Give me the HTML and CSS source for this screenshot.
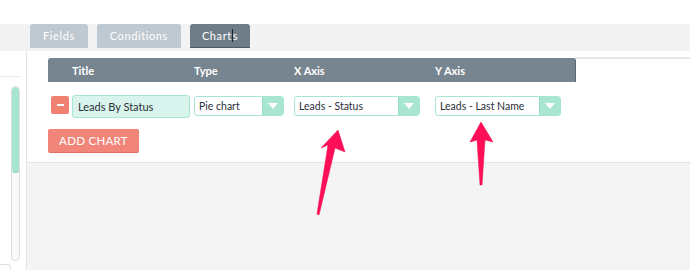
FILE: index.html
```html
<!DOCTYPE html>
<html>
<head>
<meta charset="utf-8">
<link rel="stylesheet" href="styles.css">
</head>
<body>
<div class="page">
  <div class="topspace"></div>
  <div class="tabband">
    <div class="tab">Fields</div>
    <div class="tab">Conditions</div>
    <div class="tab active">Chart<span class="caret"></span>s</div>
  </div>
  <div class="main">
    <div class="sidebar">
      <div class="side-rule"></div>
      <div class="scroll"><div class="thumb"></div></div>
      <div class="side-foot"></div>
    </div>
    <div class="content">
      <div class="panel">
        <div class="head-row">
          <div class="thead">
            <span></span>
            <span>Title</span>
            <span>Type</span>
            <span>X Axis</span>
            <span>Y Axis</span>
          </div>
          <div class="rule"></div>
        </div>
        <div class="data-row">
          <div class="remove"><span class="minus"></span></div>
          <div class="title-input">Leads By Status</div>
          <div class="select w90"><span class="val">Pie chart</span><span class="arrow"></span></div>
          <div class="select w126"><span class="val">Leads - Status</span><span class="arrow"></span></div>
          <div class="select w126"><span class="val">Leads - Last Name</span><span class="arrow"></span></div>
        </div>
        <div class="add-btn">ADD CHART</div>
      </div>
      <div class="below"></div>
    </div>
  </div>
  <svg class="annot" width="690" height="270" viewBox="0 0 690 270">
    <polygon points="338,130 345,152 335,148 319,215 317,214 328,145 321,148" />
    <polygon points="481,122 493,142 485,140 482,185 480,185 477,140 470,142" />
  </svg>
</div>
</body>
</html>
```
FILE: styles.css
```css
* { box-sizing: border-box; }
html, body { margin: 0; padding: 0; background: #fff; }
body { font-family: Lato, "Open Sans", "Liberation Sans", sans-serif; font-size: 11px; color: #333; }
.page { position: relative; width: 690px; height: 270px; overflow: hidden; display: flex; flex-direction: column; }
.topspace { height: 24px; background: #fff; }
.tabband { height: 28px; background: #f3f3f3; display: flex; gap: 9px; padding-left: 30px; align-items: flex-start; }
.tab { height: 24px; line-height: 24px; padding: 0 13px; background: #bfc9d1; color: #fff; letter-spacing: 0.6px; border-radius: 3px 3px 0 0; font-size: 11px; }
.tab.active { background: #6f7d88; border-bottom: 1px solid #4e5a63; line-height: 23px; padding: 0 12px; }
.caret { display: inline-block; width: 1px; height: 13px; background: #222; vertical-align: -2px; }
.main { flex: 1; display: flex; }
.sidebar { width: 27px; border-right: 1px solid #e4e4e4; display: flex; flex-direction: column; background: #fff; }
.side-rule { height: 26px; border-bottom: 1px solid #e8e8e8; width: 20px; }
.scroll { margin: 9px 0 0 11px; width: 9px; height: 175px; border: 1px solid #dcdcdc; border-radius: 5px; background: #fafafa; overflow: hidden; }
.thumb { height: 86px; background: #a6e5d2; border-bottom: 1px solid #7ccbb4; border-radius: 4px; }
.side-foot { margin-top: 3px; width: 11px; height: 6px; border: 1px solid #ddd; border-bottom: none; border-radius: 0 4px 0 0; border-left: none; }
.content { flex: 1; display: flex; flex-direction: column; }
.panel { background: #fff; padding: 6px 0 10px 0; border-bottom: 1px solid #e4e4e4; }
.head-row { display: flex; align-items: flex-start; }
.thead { margin-left: 21px; margin-top: 1px; width: 527px; height: 24px; background: #778590; border-radius: 3px 3px 0 0; display: grid; grid-template-columns: 24px 122px 100px 141px 1fr; align-items: center; color: #fff; font-weight: 700; font-size: 11px; box-shadow: 1px 0 0 #5d6a74; }
.rule { flex: 1; border-top: 2px solid #e6e6e6; }
.data-row { margin: 12px 0 0 21px; height: 24px; display: grid; grid-template-columns: 24px 122px 100px 141px 1fr; align-items: center; }
.remove { margin-left: 3px; width: 18px; height: 18px; background: #f0806f; border-radius: 2px; display: flex; align-items: center; justify-content: center; margin-top: -2px; }
.minus { width: 7px; height: 2px; background: #fff; }
.title-input { width: 118px; height: 23px; background: #d9f4ec; border: 1px solid #a8e5d3; border-radius: 3px; line-height: 21px; padding-left: 5px; color: #2a2f3a; }
.select { height: 20px; border: 1px solid #a8e5d3; border-radius: 3px; background: #fff; display: flex; overflow: hidden; }
.w90 { width: 90px; }
.w126 { width: 126px; }
.val { flex: 1; line-height: 18px; padding-left: 4px; color: #2a2f3a; font-size: 10.5px; white-space: nowrap; }
.arrow { width: 21px; background: #a8e5d3; position: relative; border-left: 1px solid #93dcc6; }
.arrow::after { content: ""; position: absolute; left: 5px; top: 6px; border-left: 5px solid transparent; border-right: 5px solid transparent; border-top: 6px solid #fff; }
.add-btn { margin: 11px 0 0 21px; width: 91px; height: 23px; background: #f2857a; color: #fff; border-radius: 2px; text-align: center; line-height: 23px; font-size: 11.5px; letter-spacing: 0.3px; box-shadow: 0 1px 0 #e06e62; }
.below { flex: 1; background: #f4f4f4; }
.annot { position: absolute; left: 0; top: 0; pointer-events: none; }
.annot polygon { fill: #ff0f58; stroke: #e8064d; stroke-width: 0.5; }
```
